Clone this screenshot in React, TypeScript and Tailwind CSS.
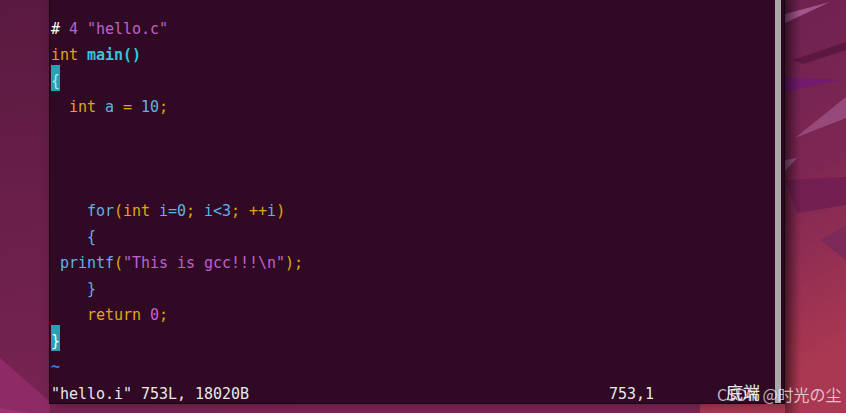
import React from 'react';

type Seg = [string, string];

// vim colours as seen in the gnome terminal
const C: Record<string, string> = {
  w: 'text-white',
  p: 'text-[#c061cb]',
  y: 'text-[#e0a80e]',
  c: 'text-[#33c7de] font-bold',
  b: 'text-[#5cb2ea]',
  t: 'text-[#3a7fe0] font-bold',
  s: 'text-[#e8e8e8]',
};

const lines: (Seg[] | 'open' | 'close')[] = [
  [['#', 'w'], [' 4 "hello.c"', 'p']],
  [['int', 'y'], [' ', 'w'], ['main()', 'c']],
  'open',
  [['  int', 'y'], [' a ', 'b'], ['=', 'y'], [' 10', 'b'], [';', 'y']],
  [],
  [],
  [],
  [
    ['    for', 'b'], ['(int', 'y'], [' i=0', 'b'], [';', 'y'], [' i<3', 'b'],
    [';', 'y'], [' ++', 'y'], ['i', 'b'], [')', 'y'],
  ],
  [['    {', 'b']],
  [[' printf', 'b'], ['(', 'y'], ['"This is gcc!!!\\n"', 'p'], [')', 'y'], [';', 'y']],
  [['    }', 'b']],
  [['    return', 'y'], [' 0', 'p'], [';', 'y']],
  'close',
  [['~', 't']],
];

function Wallpaper() {
  return (
    <svg className="absolute inset-0" width="846" height="413" viewBox="0 0 846 413">
      <defs>
        <linearGradient id="wl" x1="0" y1="0" x2="0.3" y2="1">
          <stop offset="0" stopColor="#5a1a40" />
          <stop offset="1" stopColor="#7a2553" />
        </linearGradient>
        <linearGradient id="wr" x1="0" y1="0" x2="0.2" y2="1">
          <stop offset="0" stopColor="#6a2050" />
          <stop offset="0.55" stopColor="#7f2753" />
          <stop offset="1" stopColor="#aa3852" />
        </linearGradient>
        <linearGradient id="sh" x1="0" y1="0" x2="1" y2="0">
          <stop offset="0" stopColor="#000" stopOpacity="0.35" />
          <stop offset="1" stopColor="#000" stopOpacity="0" />
        </linearGradient>
      </defs>
      <rect width="846" height="413" fill="url(#wl)" />
      <rect x="700" width="146" height="413" fill="url(#wr)" />
      <polygon points="0,358 50,402 50,413 0,413" fill="#8e2b64" />
      <polygon points="0,408 30,413 0,413" fill="#9c3270" />
      <polygon points="785,23 830,2 785,14" fill="#a4568c" />
      <polygon points="793,60 846,42 846,50 803,64" fill="#5c1840" />
      <polygon points="785,77 840,80 785,92" fill="#731a6e" />
      <polygon points="795,138 846,97 846,118 810,132" fill="#98497c" />
      <polygon points="785,160 797,158 785,171" fill="#a0568a" />
      <polygon points="785,180 846,177 846,205 797,213" fill="#731f52" />
      <polygon points="820,240 846,225 846,260" fill="#7c2a5a" />
      <rect x="785" width="16" height="413" fill="url(#sh)" />
    </svg>
  );
}

export default function App() {
  return (
    <div className="relative w-[846px] h-[413px] overflow-hidden bg-[#6a2050]">
      <Wallpaper />
      <div className="relative flex h-full">
        <div className="w-[49px] shrink-0" />
        <div className="flex h-[404px] border-l border-b border-r border-[#1a0512] bg-[#300a24] shadow-[4px_0_10px_rgba(0,0,0,0.35)]">
          <div
            className="w-[725px] pt-[13px] pl-[1px] text-[15px] tracking-[-0.03px] whitespace-pre"
            style={{ fontFamily: '"DejaVu Sans Mono", "Noto Sans CJK SC", monospace' }}
          >
            {lines.map((ln, i) => {
              if (ln === 'open' || ln === 'close') {
                return (
                  <div key={i} className="h-[26px] leading-[32px]">
                    <span
                      className={
                        'inline-block w-[9px] h-[26px] align-top bg-[#2aa1b3] ' +
                        (ln === 'open' ? 'text-[#a6ecf4]' : 'text-white')
                      }
                    >
                      {ln === 'open' ? '{' : '}'}
                    </span>
                  </div>
                );
              }
              return (
                <div key={i} className="h-[26px] leading-[32px]">
                  {ln.map(([t, k], j) => (
                    <span key={j} className={C[k]}>
                      {t}
                    </span>
                  ))}
                </div>
              );
            })}
            <div className="h-[26px] leading-[32px] text-[#e8e8e8]">
              <span>{'"hello.i" 753L, 18020B'}</span>
              <span>{' '.repeat(40)}</span>
              <span>753,1</span>
              <span>{' '.repeat(8)}</span>
              <span className="text-[17px]">底端</span>
            </div>
          </div>
          <div className="w-[6px] bg-[#a9a9a9]" />
          <div className="w-[3px] bg-[#2a0820]" />
        </div>
      </div>
      <div
        className="absolute left-[717px] top-[384px] text-[16px] leading-[20px] text-white/70 whitespace-nowrap"
        style={{ fontFamily: '"Noto Sans CJK SC", "Noto Sans", sans-serif' }}
      >
        CSDN @时光の尘
      </div>
    </div>
  );
}
